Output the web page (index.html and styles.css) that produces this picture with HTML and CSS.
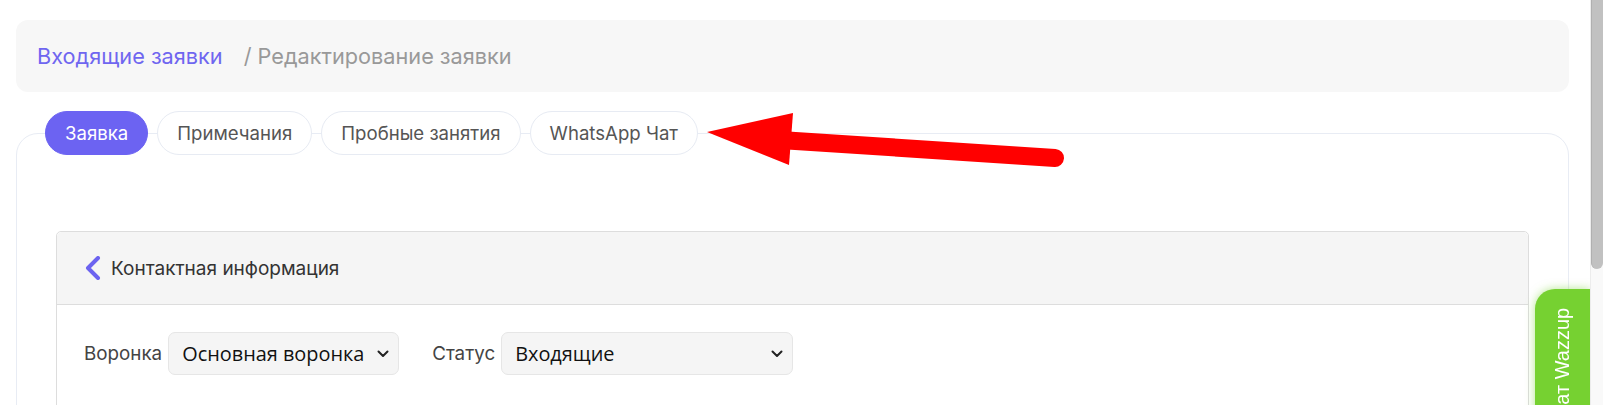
FILE: index.html
```html
<!DOCTYPE html>
<html lang="ru">
<head>
<meta charset="utf-8">
<title>Редактирование заявки</title>
<link rel="stylesheet" href="styles.css">
</head>
<body>
<div class="page">
  <div class="crumbs">
    <a class="crumb-link">Входящие заявки</a>
    <span class="crumb-current">/ Редактирование заявки</span>
  </div>

  <div class="tabs">
    <span class="tab active">Заявка</span>
    <span class="tab">Примечания</span>
    <span class="tab">Пробные занятия</span>
    <span class="tab">WhatsApp Чат</span>
  </div>

  <div class="card">
    <div class="panel">
      <div class="panel-head">
        <svg class="back" width="16" height="24" viewBox="0 0 16 24"><path d="M13 2 L3 12 L13 22" fill="none" stroke="#6c63f0" stroke-width="4" stroke-linecap="round" stroke-linejoin="round"/></svg>
        <span class="panel-title">Контактная информация</span>
      </div>
      <div class="panel-body">
        <div class="field">
          <span class="label">Воронка</span>
          <div class="select select-funnel">
            <span class="select-text">Основная воронка</span>
            <svg class="caret" width="12" height="8" viewBox="0 0 12 8"><path d="M1.5 1.5 L6 6 L10.5 1.5" fill="none" stroke="#222" stroke-width="2" stroke-linecap="round" stroke-linejoin="round"/></svg>
          </div>
        </div>
        <div class="field">
          <span class="label">Статус</span>
          <div class="select select-status">
            <span class="select-text">Входящие</span>
            <svg class="caret" width="12" height="8" viewBox="0 0 12 8"><path d="M1.5 1.5 L6 6 L10.5 1.5" fill="none" stroke="#222" stroke-width="2" stroke-linecap="round" stroke-linejoin="round"/></svg>
          </div>
        </div>
      </div>
    </div>
  </div>
</div>

<svg class="arrow" width="1603" height="405" viewBox="0 0 1603 405">
  <line x1="780" y1="140" x2="1055" y2="158" stroke="#ff0000" stroke-width="18" stroke-linecap="round"/>
  <polygon points="707,132 793,113 789,165" fill="#ff0000"/>
</svg>

<div class="wazzup">Чат Wazzup</div>

<div class="scrollbar"><div class="thumb"></div></div>
</body>
</html>
```

FILE: styles.css
```css
* { box-sizing: border-box; }

html, body {
  margin: 0;
  padding: 0;
  height: 405px;
  overflow: hidden;
  background: #ffffff;
  font-family: Inter, "Noto Sans", sans-serif;
}

.page {
  width: 1590px;
  padding: 20px 21px 0 16px;
}

.crumbs {
  height: 72px;
  background: #f7f7f7;
  border-radius: 12px;
  display: flex;
  align-items: center;
  padding: 0 21px;
  font-size: 21.7px;
}

.crumb-link {
  color: #6f66f0;
  margin-right: 21px;
}

.crumb-current {
  color: #999999;
}

.tabs {
  position: relative;
  z-index: 1;
  display: flex;
  gap: 9px;
  margin-top: 19px;
  margin-bottom: -22px;
  padding-left: 29px;
}

.tab {
  height: 44px;
  display: flex;
  align-items: center;
  padding: 0 19px;
  border: 1px solid #e7ebf3;
  border-radius: 22px;
  background: #ffffff;
  color: #555555;
  font-size: 18.6px;
}

.tab.active {
  background: #6c63f2;
  border-color: #6c63f2;
  color: #ffffff;
}

.card {
  border: 1px solid #e8ecf4;
  border-radius: 22px 22px 0 0;
  padding: 97px 39px 0 39px;
  height: 600px;
}

.panel {
  border: 1px solid #dddddd;
  border-radius: 5px;
  height: 400px;
}

.panel-head {
  height: 73px;
  background: #f5f5f5;
  border-bottom: 1px solid #dddddd;
  border-radius: 5px 5px 0 0;
  display: flex;
  align-items: center;
  padding-left: 28px;
  gap: 10px;
}

.panel-title {
  font-size: 19px;
  color: #333333;
}

.panel-body {
  display: flex;
  padding: 27px 0 0 27px;
  gap: 33px;
}

.field {
  display: flex;
  align-items: center;
  gap: 6px;
}

.label {
  font-size: 18.8px;
  color: #444444;
}

.select {
  height: 43px;
  background: #f5f5f5;
  border: 1px solid #e6e6e6;
  border-radius: 7px;
  display: flex;
  align-items: center;
  justify-content: space-between;
  padding: 0 9px 0 13px;
  font-family: "Open Sans", "Noto Sans", sans-serif;
  font-size: 19.9px;
  color: #111111;
}

.select-funnel { width: 231px; }
.select-status { width: 292px; }

.caret { flex: none; }

.arrow {
  position: fixed;
  left: 0;
  top: 0;
  z-index: 5;
  pointer-events: none;
}

.wazzup {
  position: fixed;
  left: 1535px;
  top: 289px;
  width: 55px;
  height: 160px;
  background: #76d131;
  border-radius: 0 0 20px 0;
  box-shadow: 0 0 10px rgba(118, 209, 49, 0.55);
  color: #ffffff;
  font-family: "Liberation Sans", Arial, sans-serif;
  font-size: 20px;
  writing-mode: vertical-rl;
  transform: rotate(180deg);
  display: flex;
  align-items: center;
  justify-content: flex-end;
  padding-bottom: 19px;
  z-index: 6;
}

.scrollbar {
  position: fixed;
  right: 0;
  top: 0;
  width: 13px;
  height: 405px;
  background: #f9f9f9;
  border-left: 1px solid #ececec;
  z-index: 7;
}

.thumb {
  width: 12px;
  height: 269px;
  background: #c1c1c1;
  border-radius: 0 0 6px 6px;
  border-left: 1px solid #b0b0b0;
}
```
